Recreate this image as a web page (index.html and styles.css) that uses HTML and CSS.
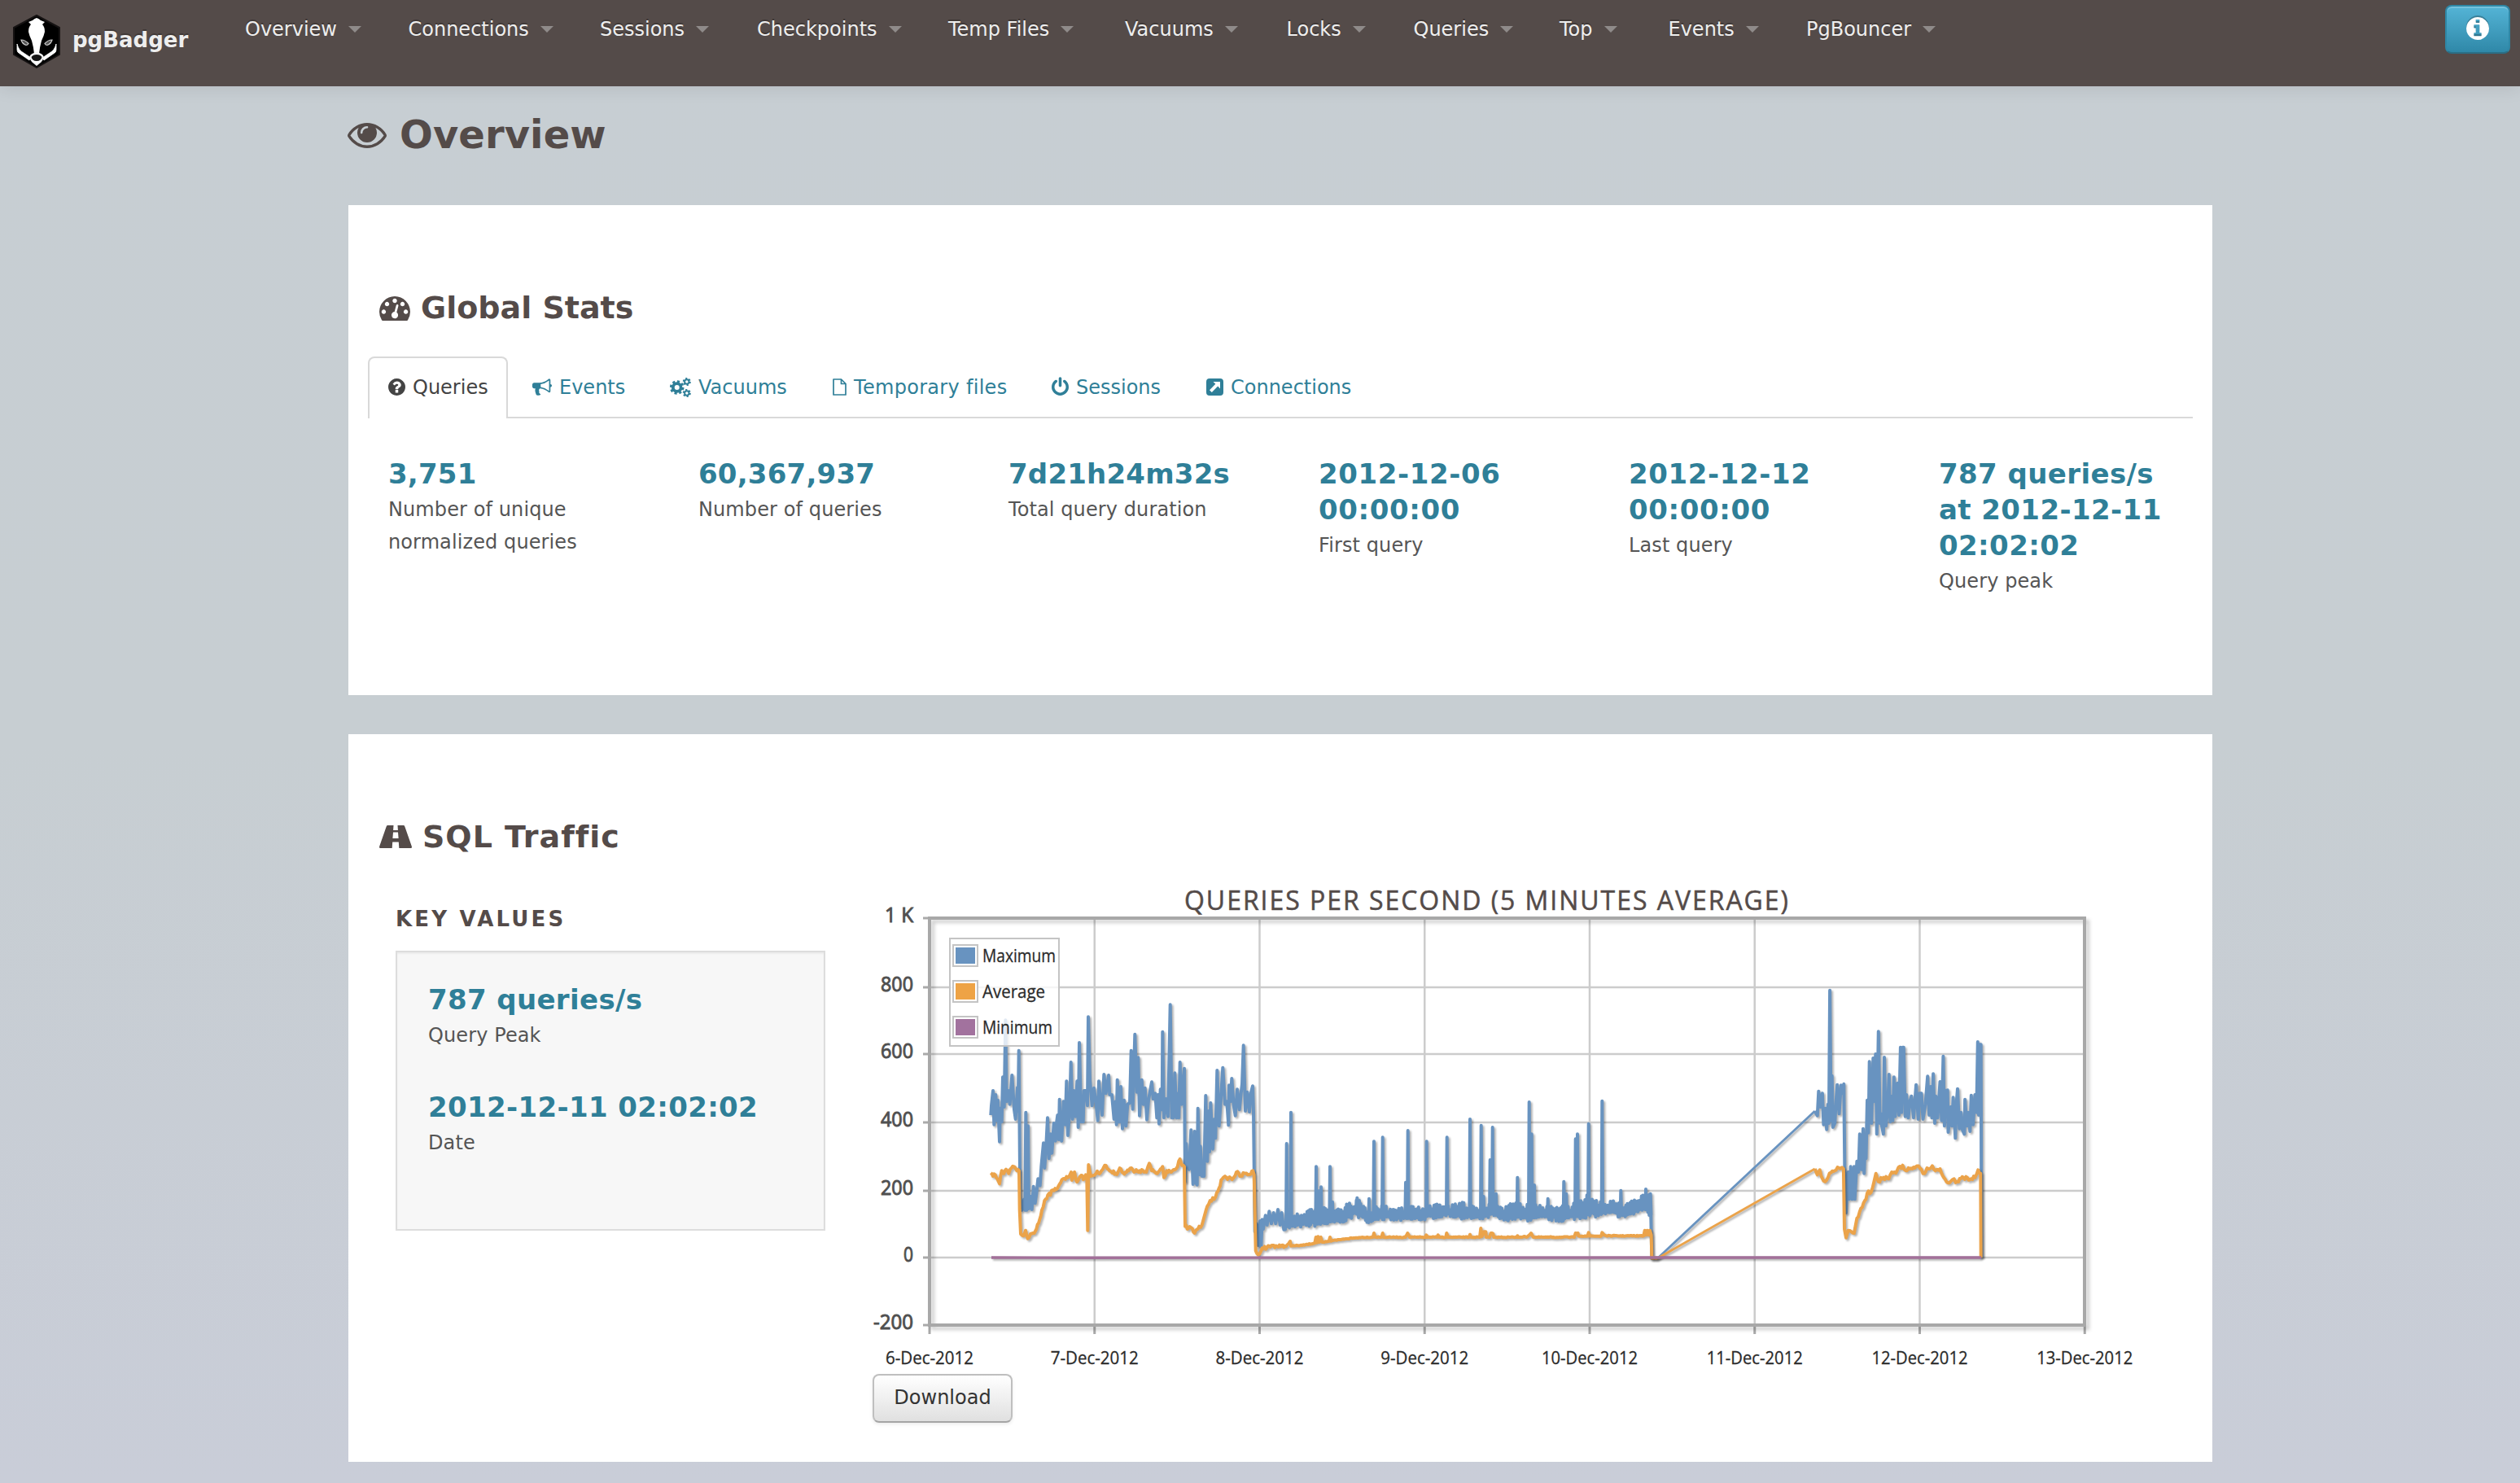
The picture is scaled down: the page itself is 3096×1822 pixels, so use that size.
FILE: index.html
```html
<!DOCTYPE html>
<html lang="en">
<head>
<meta charset="utf-8">
<title>pgBadger</title>
<link rel="stylesheet" href="styles.css">
</head>
<body>
<svg class="defs" width="0" height="0" aria-hidden="true">
  <symbol id="eye" viewBox="0 384 1792 1152"><path d="M1664 960q-152-236-381-353 61 104 61 225 0 185-131.5 316.5t-316.5 131.5-316.5-131.5-131.5-316.5q0-121 61-225-229 117-381 353 133 205 333.5 326.5t434.5 121.5 434.5-121.5 333.5-326.5zm-720-384q0-20-14-34t-34-14q-125 0-214.5 89.5t-89.5 214.5q0 20 14 34t34 14 34-14 14-34q0-86 61-147t147-61q20 0 34-14t14-34zm848 384q0 34-20 69-140 230-376.5 368.5t-499.5 138.5-499.5-139-376.5-368q-20-35-20-69t20-69q140-229 376.5-368t499.5-139 499.5 139 376.5 368q20 35 20 69z"/></symbol>
  <symbol id="dashboard" viewBox="0 256 1792 1408"><path d="M384 1152q0-53-37.5-90.5t-90.5-37.5-90.5 37.5-37.5 90.5 37.5 90.5 90.5 37.5 90.5-37.5 37.5-90.5zm192-448q0-53-37.5-90.5t-90.5-37.5-90.5 37.5-37.5 90.5 37.5 90.5 90.5 37.5 90.5-37.5 37.5-90.5zm428 481l101-382q6-26-7.5-48.5t-38.5-29.5-48 6.5-30 39.5l-101 382q-60 5-107 43.5t-63 98.5q-20 77 20 146t117 89 146-20 89-117q16-60-6-117t-72-91zm660-33q0-53-37.5-90.5t-90.5-37.5-90.5 37.5-37.5 90.5 37.5 90.5 90.5 37.5 90.5-37.5 37.5-90.5zm-640-640q0-53-37.5-90.5t-90.5-37.5-90.5 37.5-37.5 90.5 37.5 90.5 90.5 37.5 90.5-37.5 37.5-90.5zm448 192q0-53-37.5-90.5t-90.5-37.5-90.5 37.5-37.5 90.5 37.5 90.5 90.5 37.5 90.5-37.5 37.5-90.5zm320 448q0 261-141 483-19 29-54 29h-1402q-35 0-54-29-141-221-141-483 0-182 71-348t191-286 286-191 348-71 348 71 286 191 191 286 71 348z"/></symbol>
  <symbol id="question" viewBox="128 128 1536 1536"><path d="M1024 1376v-192q0-14-9-23t-23-9h-192q-14 0-23 9t-9 23v192q0 14 9 23t23 9h192q14 0 23-9t9-23zm256-672q0-88-55.5-163t-138.5-116-170-41q-243 0-371 213-15 24 8 42l132 100q7 6 19 6 16 0 25-12 53-68 86-92 34-24 86-24 48 0 85.5 26t37.5 59q0 38-20 61t-68 45q-63 28-115.5 86.5t-52.5 125.5v36q0 14 9 23t23 9h192q14 0 23-9t9-23q0-19 21.5-49.5t54.5-49.5q32-18 49-28.5t46-35 44.5-48 28-60.5 12.5-81zm384 192q0 209-103 385.5t-279.5 279.5-385.5 103-385.5-103-279.5-279.5-103-385.5 103-385.5 279.5-279.5 385.5-103 385.5 103 279.5 279.5 103 385.5z"/></symbol>
  <symbol id="info" viewBox="128 128 1536 1536"><path d="M1152 1376v-160q0-14-9-23t-23-9h-96v-512q0-14-9-23t-23-9h-320q-14 0-23 9t-9 23v160q0 14 9 23t23 9h96v320h-96q-14 0-23 9t-9 23v160q0 14 9 23t23 9h448q14 0 23-9t9-23zm-128-896v-160q0-14-9-23t-23-9h-192q-14 0-23 9t-9 23v160q0 14 9 23t23 9h192q14 0 23-9t9-23zm640 416q0 209-103 385.5t-279.5 279.5-385.5 103-385.5-103-279.5-279.5-103-385.5 103-385.5 279.5-279.5 385.5-103 385.5 103 279.5 279.5 103 385.5z"/></symbol>
  <symbol id="bullhorn" viewBox="0 128 1792 1536"><path d="M1664 640q53 0 90.5 37.5t37.5 90.5-37.5 90.5-90.5 37.5v384q0 52-38 90t-90 38q-417-347-812-380-58 19-91 66t-31 100.5 40 92.5q-20 33-23 65.5t6 58 33.5 55 48 50 61.5 50.5q-29 58-111.5 83t-168.5 11.5-132-55.5q-7-23-29.5-87.5t-32-94.5-23-89-15-101 3.5-98.5 22-110.5h-122q-66 0-113-47t-47-113v-192q0-66 47-113t113-47h480q435 0 896-384 52 0 90 38t38 90v384zm-128 604v-954q-394 302-768 343v270q377 42 768 341z"/></symbol>
  <symbol id="cogs" viewBox="0 0 26 24"><g fill="none" stroke="currentColor"><circle cx="8.700" cy="12" r="4.900" stroke-width="3.800"/><circle cx="8.700" cy="12" r="7.400" stroke-width="2.800" stroke-dasharray="3.100 2.710"/><circle cx="20.800" cy="5" r="2.700" stroke-width="1.900"/><circle cx="20.800" cy="5" r="4.100" stroke-width="1.900" stroke-dasharray="2.150 2.140"/><circle cx="20.800" cy="19" r="2.700" stroke-width="1.900"/><circle cx="20.800" cy="19" r="4.100" stroke-width="1.900" stroke-dasharray="2.150 2.140"/></g></symbol>
  <symbol id="file" viewBox="0 0 17 21"><path fill="none" stroke="currentColor" stroke-width="1.700" stroke-linejoin="round" d="M1 1h9.500l5.500 5.500V20H1zM10.500 1v5.500H16"/></symbol>
  <symbol id="power" viewBox="128 0 1536 1664"><path d="M1664 896q0 156-61 298t-164 245-245 164-298 61-298-61-245-164-164-245-61-298q0-182 80.500-343t226.500-270q43-32 95.500-25t83.500 50q32 42 24.500 94.500t-49.500 84.500q-98 74-151.500 181t-53.500 228q0 104 40.500 198.500t109.500 163.500 163.500 109.500 198.500 40.500 198.500-40.500 163.500-109.500 109.500-163.500 40.500-198.500q0-121-53.500-228t-151.500-181q-42-32-49.500-84.500t24.500-94.500q31-43 84-50t95 25q146 109 226.500 270t80.500 343zm-640-768v640q0 52-38 90t-90 38-90-38-38-90v-640q0-52 38-90t90-38 90 38 38 90z"/></symbol>
  <symbol id="external" viewBox="0 0 21 21"><path fill-rule="evenodd" d="M4 0h13a4 4 0 0 1 4 4v13a4 4 0 0 1-4 4H4a4 4 0 0 1-4-4V4a4 4 0 0 1 4-4zM8.500 4l2.800 2.700L4 14.200 6.800 17l7.400-7.400L17 12.400V4z"/></symbol>
  <symbol id="road" viewBox="0 0 40 28"><path fill-rule="evenodd" d="M10.500 0h7l-.4 6h5.800l-.4-6h7c1 0 1.500.6 1.800 1.400l8.500 24.400c.4 1.300 0 2.200-1.200 2.200H24.300l-.5-7.500h-7.600l-.5 7.500H1.400C.2 28-.2 27.100.2 25.800L8.700 1.400C9 .6 9.500 0 10.500 0zM17 8.500l-.6 7.500h7.200L23 8.500z"/></symbol>
</svg>

<header class="topbar">
  <a class="brand">
    <svg class="logo" viewBox="0 0 58 66">
      <path d="M29 1 57 16v33L29 65 1 49V16z" fill="#000" stroke="#151212" stroke-width="2" stroke-linejoin="round"/>
      <path d="M29 4q3 1 5 3l5 2-3 3q3 3 3 9-1 5-4 11-2 7-3 16h-6q-1-9-3-16-3-6-4-11 0-6 3-9l-3-3 5-2q2-2 5-3z" fill="#fff"/>
      <path d="M5 36q2 8 8 11l9 6-2 3-13-9q-2-1-2-4zM53 36q-2 8-8 11l-9 6 2 3 13-9q2-1 2-4z" fill="#fff" stroke="#fff" stroke-width=".8"/>
      <path d="M21 52q1-4 8-5 7 1 8 5-1 4-3 6l-5 4-5-4q-2-2-3-6z" fill="#fff" stroke="#eee" stroke-width="1.500"/>
      <path d="M22.500 52q2-3 6.500-3t6.500 3q-1 5-6.500 5t-6.500-5z" fill="#161616"/>
      <path d="M10 31q5 0 9 4.500-1 2-3 2-5-2-6-6.500zM48 31q-5 0-9 4.500 1 2 3 2 5-2 6-6.500z" fill="#555" stroke="#c9c9c9" stroke-width="1.200"/>
    </svg>
    <span>pgBadger</span>
  </a>
  <nav class="menu">
    <a>Overview<i class="caret"></i></a>
    <a>Connections<i class="caret"></i></a>
    <a>Sessions<i class="caret"></i></a>
    <a>Checkpoints<i class="caret"></i></a>
    <a>Temp Files<i class="caret"></i></a>
    <a>Vacuums<i class="caret"></i></a>
    <a>Locks<i class="caret"></i></a>
    <a>Queries<i class="caret"></i></a>
    <a>Top<i class="caret"></i></a>
    <a>Events<i class="caret"></i></a>
    <a>PgBouncer<i class="caret"></i></a>
  </nav>
  <button class="info-btn"><svg><use href="#info"/></svg></button>
</header>

<main class="page">
  <h1><svg class="i-eye"><use href="#eye"/></svg>Overview</h1>

  <section class="card stats-card">
    <h3><svg class="i-dash"><use href="#dashboard"/></svg>Global Stats</h3>
    <ul class="tabs">
      <li class="active"><svg class="w21"><use href="#question"/></svg>Queries</li>
      <li><svg class="w24"><use href="#bullhorn"/></svg>Events</li>
      <li><svg class="w26"><use href="#cogs"/></svg>Vacuums</li>
      <li class="wide"><svg class="w17"><use href="#file"/></svg>Temporary files</li>
      <li><svg class="w21 tall"><use href="#power"/></svg>Sessions</li>
      <li><svg class="w21"><use href="#external"/></svg>Connections</li>
    </ul>
    <div class="stats">
      <div class="stat"><h4>3,751</h4><p>Number of unique normalized queries</p></div>
      <div class="stat"><h4>60,367,937</h4><p>Number of queries</p></div>
      <div class="stat"><h4>7d21h24m32s</h4><p>Total query duration</p></div>
      <div class="stat"><h4 class="date">2012-12-06 00:00:00</h4><p>First query</p></div>
      <div class="stat"><h4 class="date">2012-12-12 00:00:00</h4><p>Last query</p></div>
      <div class="stat"><h4 class="peak">787 queries/s at 2012-12-11 02:02:02</h4><p>Query peak</p></div>
    </div>
  </section>

  <section class="card traffic-card">
    <h3 class="traffic-title"><svg class="i-road"><use href="#road"/></svg>SQL Traffic</h3>
    <div class="traffic">
      <div class="keys">
        <h5>KEY VALUES</h5>
        <div class="well">
          <div class="stat"><h4>787 queries/s</h4><p>Query Peak</p></div>
          <div class="stat"><h4>2012-12-11 02:02:02</h4><p>Date</p></div>
        </div>
      </div>
      <div class="chart">
        <svg id="plot" viewBox="1060 1080 1580 608" width="1580" height="608"></svg>
        <button class="download">Download</button>
      </div>
    </div>
  </section>
</main>
<script src="chart.js"></script>
</body>
</html>
```
FILE: styles.css
```css
* { box-sizing: border-box; }
body {
  margin: 0;
  min-height: 1822px;
  background: linear-gradient(#c7ced3, #c7ced2 50%, #c9cdd8);
  font: 24px/40px Verdana, "DejaVu Sans", sans-serif;
  color: #555;
}
svg { fill: currentColor; flex: none; }
.defs { position: absolute; }
h1, h3, h4, h5, p, ul { margin: 0; padding: 0; }

.topbar {
  display: flex;
  align-items: flex-start;
  height: 106px;
  padding: 0 12px 0 16px;
  background: #544b49;
  box-shadow: 0 2px 20px rgba(0, 0, 0, .1);
  color: #eee;
  text-shadow: 0 -2px 0 rgba(0, 0, 0, .25);
}
.brand { display: flex; gap: 15px; width: 285px; padding-top: 18px; font-size: 26px; line-height: 62px; font-weight: bold; }
.logo { width: 58px; height: 66px; }
.menu {
  flex: 1;
  display: grid;
  grid-template-columns: 200.5px 235.5px 193px 235px 217px 198.5px 156px 179.5px 133.5px 169.5px 200px;
  padding-top: 16px;
}
.menu a { display: flex; align-items: center; gap: 14px; }
.caret { border: 8px solid transparent; border-top-color: #8f8b8a; border-bottom: 0; }
.info-btn {
  display: flex;
  justify-content: center;
  width: 80px;
  height: 60px;
  margin-top: 6px;
  padding: 13px 0 0;
  border: 2px solid #2f87a5;
  border-bottom-color: #2a6f86;
  border-radius: 8px;
  background: linear-gradient(#54b4d6, #2f88a8);
  box-shadow: inset 0 2px 0 rgba(255, 255, 255, .2);
  color: #fff;
}
.info-btn svg { width: 28px; height: 28px; filter: drop-shadow(0 -2px 0 rgba(0, 0, 0, .25)); }

.page { width: 2290px; margin: 29px 0 0 428px; }
h1, h3, h5 { display: flex; align-items: center; color: #544b49; font-weight: bold; }
h1 { height: 60px; gap: 16px; margin-bottom: 57px; font-size: 48px; line-height: 60px; letter-spacing: .1px; }
.i-eye { width: 48px; height: 31px; margin: 2px 0 0 -1px; }
.card { padding: 106px 24px 0; background: #fff; }
.stats-card { height: 602px; margin-bottom: 48px; }
.traffic-card { height: 894px; }
h3 { padding-left: 14px; font-size: 38px; line-height: 40px; }
.i-dash { width: 38px; height: 30px; margin: 2px 13px 0 0; }
.i-road { width: 40px; height: 28px; margin-right: 13px; }
.traffic-title { letter-spacing: 1px; }

.tabs {
  display: grid;
  grid-template-columns: 176px 169px 200px 269px 190px 200px;
  height: 76px;
  margin-top: 40px;
  border-bottom: 2px solid #d9d9d9;
  list-style: none;
  color: #2f7f98;
}
.tabs li { display: flex; align-items: flex-start; gap: 9px; padding: 18px 0 0 26px; white-space: nowrap; }
.tabs .wide { letter-spacing: .3px; }
.tabs .active {
  width: 172px;
  height: 76px;
  padding: 16px 0 0 23px;
  border: 2px solid #d9d9d9;
  border-bottom: 0;
  border-radius: 8px 8px 0 0;
  background: #fff;
  color: #444;
}
.tabs svg { height: 21px; margin-top: 9px; }
.w17 { width: 17px; }
.w21 { width: 21px; }
.w24 { width: 24px; }
.tabs .w26 { width: 26px; height: 24px; margin-top: 8px; }
.tabs .tall { height: 23px; margin-top: 7px; }

.stats { display: grid; grid-template-columns: repeat(6, 381px); padding: 46px 0 0 25px; }
.stats .stat { width: 295px; }
h4 { color: #2f7f98; font-size: 34px; line-height: 44px; font-weight: bold; letter-spacing: .2px; }
.date { letter-spacing: .6px; }
.peak { letter-spacing: .4px; }
.stat p { margin-top: 2px; letter-spacing: .1px; }

.traffic { display: flex; margin-top: 32px; }
.keys { width: 574px; margin-left: 34px; padding-top: 29px; }
h5 { font-size: 26px; letter-spacing: 3.200px; margin-bottom: 19px; }
.well {
  width: 528px;
  height: 344px;
  padding: 36px 0 0 38px;
  border: 2px solid #ddd;
  background: #f7f7f7;
  box-shadow: inset 0 2px 2px rgba(0, 0, 0, .05);
}
.well .stat { margin-bottom: 46px; }
.well h4 { letter-spacing: .35px; }
.chart { width: 1580px; }
.chart svg { display: block; }
.download {
  display: block;
  width: 172px;
  height: 60px;
  margin-left: 12px;
  padding: 0 0 2px;
  border: 2px solid #bfbfbf;
  border-bottom-color: #a5a5a5;
  border-radius: 8px;
  background: linear-gradient(#fff, #e0e0e0);
  box-shadow: 0 2px 4px rgba(0, 0, 0, .08);
  color: #333;
  font: inherit;
}

.grid { stroke: #ccc; stroke-width: 2.500; fill: none; }
.tick { stroke: #aaa; stroke-width: 3; fill: none; }
.frame { stroke: #a8a8a8; stroke-width: 4; fill: none; filter: drop-shadow(4px 4px 2px rgba(0, 0, 0, .2)); }
.series { fill: none; stroke-width: 4; stroke-linejoin: round; filter: drop-shadow(2px 2px 1px rgba(0, 0, 0, .3)); }
.max { stroke: #6893c0; }
.avg { stroke: #eba34a; }
.min { stroke: #a27099; stroke-width: 3.400; }
.link { stroke-width: 2.800; }
#plot text { font-family: "Trebuchet MS", "Open Sans", sans-serif; }
#plot .title { font-size: 32px; fill: #544b49; stroke: #544b49; stroke-width: .5; }
#plot .ylab { font-size: 26px; fill: #505050; stroke: #505050; stroke-width: 1; }
#plot .xlab, #plot .leg { font-size: 21px; fill: #2b2b2b; stroke: #2b2b2b; stroke-width: .3; }
```
FILE: chart.js
```js
// Each series is traced as x:y pairs within a tile; a tile has its own origin and scale.
const tiles = {
  left:   [1200, 1220, 3, 3],
  middle: [1580, 1320, 3, 3],
  right:  [2020, 1180, 2.6133, 3]
};
const place = (tile, list) => {
  const [ox, oy, sx, sy] = tiles[tile];
  return list.map(([x, y]) => [ox + x / sx, oy + y / sy]);
};
const parse = s => s.trim().split(/[\s,]+/).map(p => p.split(':').map(Number));

let seed = 7;
const rnd = () => (seed = (seed * 16807) % 2147483647) / 2147483647;

const maxLeft = parse(`52:450 54:415 60:360 64:485 70:375 74:470 78:395 84:548 86:425 92:475 96:310 101:420 106:100 110:400 116:360
122:410 130:303 138:430 143:465 150:348 152:435 155:212 160:750 166:800 175:760 178:800 181:440 184:800 189:490 192:795 200:750
203:798 209:713 215:775 220:740 226:685 233:710 238:640 246:553 250:645 256:560 261:460 266:610 272:520 277:590 284:480 290:545
294:480 298:450 302:540 305:392 309:530 313:545 320:400 326:485 331:325 336:525 342:440 347:255 353:465 358:360 364:455 370:325
374:495 378:183 385:475 388:380 392:475 395:360 402:360 408:415 411:88 417:320 425:415 432:350 440:410 446:470 450:325 456:400
462:450 469:300 476:370 486:303 490:375 498:375 506:465 512:400 515:485 518:320 525:475 531:345 537:500 543:395 550:490 556:410
564:405 569:212 575:428 583:152 590:365 595:238 600:452 608:320 614:410 620:350 627:467 633:395 645:328 650:390 658:370 664:460
668:375 672:482 677:355 683:430 685:143 690:460 697:390 705:455 713:43 719:460 725:460 730:295 737:460 743:370 745:460 749:255
755:410 765:278 768:695 772:555 776:620 783:650 790:505 797:705 803:510 808:700 812:707 815:425 822:670 824:565 830:675 838:675
840:560 844:378 850:620 855:435 858:585 862:405 870:575 876:465 880:535 886:285 893:490 900:390 907:275 915:410 922:400 928:487
930:340 935:400 940:315 947:415 953:452 960:355 968:430 974:370 978:335 983:193 990:435 997:365 1005:438 1010:370 1017:343
1020:440 1025:880 1030:850 1037:930 1041:860 1045:840 1048:935 1052:835 1056:870 1064:820 1070:855 1078:805 1086:850 1094:810
1102:850 1110:798 1118:855 1124:810 1132:872`);

// Busy stretch in the middle: upper and lower bounds of the band, then single peaks.
const band = [[-4,530,572],[50,510,564],[90,488,562],[130,485,559],[200,490,550],[260,455,525],[300,495,547],[340,480,535],
[400,490,540],[450,478,542],[500,492,538],[550,478,530],[600,480,525],[660,470,535],[720,478,540],[760,470,525],[800,490,542],
[840,470,536],[900,478,542],[960,482,535],[1000,490,544],[1050,472,538],[1100,460,530],[1150,460,525],[1200,460,520],
[1240,472,530],[1280,458,520],[1320,440,500],[1345,440,530]];
const peaks = parse(`2:255 18:140 111:340 121:430 129:415 162:340 171:470 262:455 306:458 324:247 356:232 441:398 449:207 518:247
593:232 678:165 719:188 728:450 752:315 761:195 774:440 853:380 896:102 905:220 915:408 965:458 1024:395 1033:440 1067:238
1074:220 1109:445 1115:182 1165:98 1234:428 1326:423 1343:440`);
const maxMiddle = [];
let flip = false, k = 0;
for (let x = -3; x < 1345; x += 2.6) {
  let b = 0;
  while (band[b + 1][0] < x) b++;
  const [x0, h0, l0] = band[b], [x1, h1, l1] = band[b + 1], t = (x - x0) / (x1 - x0);
  const hi = h0 + (h1 - h0) * t, lo = l0 + (l1 - l0) * t, r = rnd();
  if (k < peaks.length && peaks[k][0] <= x) {
    maxMiddle.push([peaks[k][0] - 2, lo - 12], peaks[k], [peaks[k][0] + 2.5, lo - 12]);
    k++;
  } else {
    maxMiddle.push([x, flip ? hi + r * (lo - hi) * .45 : lo - r * (lo - hi) * .28]);
  }
  flip = !flip;
}
maxMiddle.push([1343, 440], [1345, 525], [1348, 677], [1370, 677]);

const maxRight = parse(`548:555 556:572 560:482 566:540 572:490 576:605 582:545 586:623 590:530 593:600 596:110 600:590 603:425
606:615 612:600 616:520 620:458 626:565 632:460 636:490 641:455 644:780 648:930 655:780 658:880 663:760 668:880 674:760 676:880
683:740 688:780 692:640 697:770 703:620 706:785 710:640 712:730 716:515 720:635 723:373 730:600 735:360 738:520 743:345 747:640
752:262 757:600 760:565 763:610 768:640 771:357 776:610 781:560 786:420 790:595 796:500 798:590 802:430 806:575 813:452 818:570
823:320 826:560 830:320 833:320 838:575 842:495 848:580 853:520 858:500 865:580 873:458 880:585 884:490 890:490 895:585 903:530
910:427 915:570 920:465 924:580 928:418 933:600 936:500 942:580 950:447 955:590 960:353 964:610 968:480 974:478 976:633 984:540
988:610 992:505 999:655 1003:520 1006:473 1012:620 1017:560 1022:625 1028:640 1030:512 1036:610 1040:560 1046:630 1050:497
1056:605 1062:495 1067:560 1071:300 1074:570 1078:310 1081:310 1082:575 1083:1095`);

const avgLeft = parse(`52:663 60:675 68:670 84:703 92:655 100:665 108:650 118:665 128:645 138:640 148:655 156:655 158:800 162:888
172:895 180:875 188:905 198:888 208:885 220:870 232:835 240:800 250:765 262:745 285:728 305:705 318:685 335:680 348:660 351:690
360:660 366:690 374:690 385:672 393:688 402:670 406:685 409:875 412:633 416:655 420:675 440:665 460:655 472:635 485:650 500:663
520:662 527:645 540:663 560:655 570:645 580:660 600:655 625:660 636:628 645:655 665:665 685:640 690:680 700:655 730:652 740:640
749:612 756:635 765:640 768:860 780:868 790:865 803:885 815:870 830:855 845:800 860:765 875:760 885:735 905:685 920:680 945:683
957:660 970:675 990:665 1010:668 1018:655 1022:670 1028:950 1042:962 1052:940 1070:938 1090:930 1120:935 1136:932`);
const avgMiddle = parse(`0:634 15:615 18:632 60:630 106:622 110:600 114:620 118:598 122:618 128:600 133:618 158:615 162:600 166:614
220:606 270:601 320:600 324:585 328:599 352:600 356:585 360:600 440:600 448:585 456:600 514:600 517:592 520:600 556:600 560:592
564:600 589:600 592:585 597:600 674:600 678:590 682:600 714:600 718:567 722:598 730:580 736:580 738:600 750:600 755:585 763:587
766:600 850:600 853:595 856:600 890:598 903:585 912:600 1062:600 1067:585 1076:585 1078:595 1111:596 1115:583 1119:596 1161:596
1165:583 1172:592 1180:595 1318:595 1322:575 1326:592 1331:575 1336:592 1341:575 1346:592 1348:677 1370:677`);
const avgRight = parse(`548:768 556:790 564:772 576:812 590:800 600:782 612:775 625:765 640:768 643:990 648:1022 655:995 665:1000
674:1005 683:950 700:910 712:880 720:850 728:855 738:815 744:785 752:815 768:800 785:805 795:780 812:775 830:755 840:775 865:762
885:765 900:785 908:765 925:757 935:775 950:768 962:800 975:820 990:808 1005:815 1025:800 1050:805 1062:800 1072:772 1080:785
1081:1095`);

// Fills the gaps between average samples with small ripples.
const ripple = (list, amp) => list.flatMap((p, i) => {
  const q = list[i + 1];
  if (!q || Math.abs(q[1] - p[1]) > 50) return [p];
  const n = Math.floor((q[0] - p[0]) / 4), out = [p];
  for (let j = 1; j < n; j++) {
    out.push([p[0] + (q[0] - p[0]) * j / n, p[1] + (q[1] - p[1]) * j / n + (rnd() - .5) * amp]);
  }
  return out;
});

const line = (pts, cls) => `<polyline class="series ${cls}" points="${pts.map(p => p.map(v => v.toFixed(1)).join()).join(' ')}"/>`;
const seriesOf = (cls, l, m, r) => {
  const a = [...place('left', l), ...place('middle', m)], b = place('right', r);
  return line(a, cls) + line([a[a.length - 1], b[0]], cls + ' link') + line(b, cls);
};

const X = n => 1142 + 202.75 * n;
const ys = [1128, 1213, 1295, 1379, 1463, 1545, 1628];
const yNames = ['1 K', '800', '600', '400', '200', '0', '-200'];
const yWidths = [35, 40, 40, 40, 40, 12, 49];
let out = '';

for (let i = 1; i < 7; i++) out += `<path class="grid" d="M${X(i)} 1128V1628"/>`;
for (let i = 1; i < 6; i++) out += `<path class="grid" d="M1142 ${ys[i]}H2561"/>`;
ys.forEach((y, i) => {
  out += `<path class="tick" d="M1134 ${y}H1142"/>`;
  out += `<text class="ylab" x="${1122 - yWidths[i]}" y="${y + 5}" textLength="${yWidths[i]}" lengthAdjust="spacingAndGlyphs">${yNames[i]}</text>`;
});
for (let i = 0; i < 8; i++) {
  const w = i < 4 ? 108 : 118;
  out += `<path class="tick" d="M${X(i)} 1628V1639"/>`;
  out += `<text class="xlab" x="${X(i) - w / 2}" y="1676" textLength="${w}" lengthAdjust="spacingAndGlyphs">${6 + i}-Dec-2012</text>`;
}
out += '<rect class="frame" x="1142" y="1128" width="1419" height="500"/>';
out += seriesOf('max', maxLeft, maxMiddle, maxRight);
out += seriesOf('avg', ripple(avgLeft, 14), ripple(avgMiddle, 3), ripple(avgRight, 16));
out += line([[1218, 1545], [1330, 1545.2], [2434, 1545]], 'min');
out += '<text class="title" x="1455" y="1118" textLength="742">QUERIES PER SECOND (5 MINUTES AVERAGE)</text>';
out += '<rect x="1167" y="1153" width="134" height="132" fill="#fff" fill-opacity=".8" stroke="#c4c4c4" stroke-width="2"/>';
[['Maximum', '#6893c0', 90], ['Average', '#eea345', 77], ['Minimum', '#a2729e', 86]].forEach(([name, color, w], i) => {
  const y = 1161 + 44 * i;
  out += `<rect x="1171" y="${y}" width="30" height="26" fill="#fff" stroke="#c4c4c4" stroke-width="2"/>`;
  out += `<rect x="1174" y="${y + 3}" width="24" height="20" fill="${color}"/>`;
  out += `<text class="leg" x="1207" y="${y + 21}" textLength="${w}" lengthAdjust="spacingAndGlyphs">${name}</text>`;
});
document.getElementById('plot').innerHTML = out;
```
